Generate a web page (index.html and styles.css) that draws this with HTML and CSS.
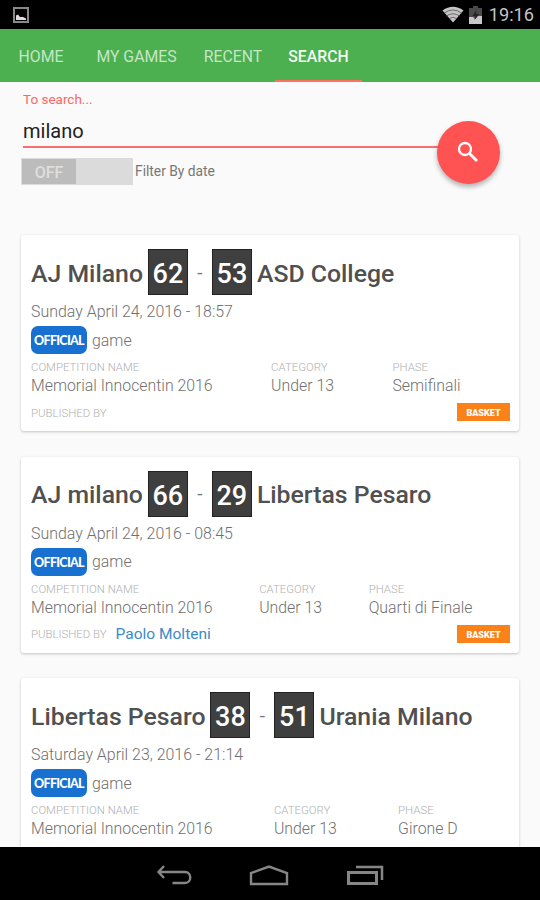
FILE: index.html
```html
<!DOCTYPE html>
<html lang="en">

<head>
    <meta charset="UTF-8" />
    <meta name="viewport" content="width=device-width, initial-scale=1.0" />
    <title>Search games</title>
    <link rel="stylesheet" href="styles.css">
</head>

<body>
    <div class="screen">
        <!-- Status bar -->
        <div class="status-bar">
            <svg class="icon-picture" width="16" height="16" viewBox="0 0 16 16">
                <path d="M1 1h14v14H1z" fill="none" stroke="#888" stroke-width="2" />
                <path d="M3 13V8.500l2-1 2 2.500h3l3 1.500V13z" fill="#ddd" />
            </svg>
            <div class="status-right">
                <svg width="22" height="17" viewBox="0 0 22 17">
                    <path d="M0.500 4.500Q11-3 21.500 4.500L11 16.500z" fill="#c4c4c4" />
                    <path d="M2 7.200Q11 0.800 20 7.200M4.500 10Q11 5.500 17.500 10M7 12.600Q11 10 15 12.600" fill="none" stroke="#555" stroke-width="0.800" />
                </svg>
                <svg width="13" height="18" viewBox="0 0 13 18">
                    <path d="M4 0h5v2h4v16H0V2h4z" fill="#4a4a4a" />
                    <path d="M0 11h4l2 2 3-3h4v8H0z" fill="#c8c8c8" />
                    <path d="M7.500 4L3.500 10h3l-1 4 4.500-6H7z" fill="#222" />
                </svg>
                <span class="clock">19:16</span>
            </div>
        </div>

        <!-- Tabs -->
        <nav class="tabs">
            <a class="tab tab-home">HOME</a>
            <a class="tab tab-games">MY GAMES</a>
            <a class="tab tab-recent">RECENT</a>
            <a class="tab tab-search active">SEARCH</a>
        </nav>

        <main class="content">
            <!-- Search form -->
            <div class="search-form">
                <div class="search-field">
                    <div class="search-label">To search...</div>
                    <div class="search-value">milano</div>
                </div>
                <div class="filter">
                    <div class="switch"><span class="switch-thumb">OFF</span></div>
                    <span class="filter-label">Filter By date</span>
                </div>
                <div class="fab">
                    <svg width="22" height="22" viewBox="0 0 22 22" fill="none" stroke="#fff">
                        <circle cx="8" cy="8" r="6" stroke-width="2.300" />
                        <path d="M12.500 12.500L20 20" stroke-width="2.800" />
                    </svg>
                </div>
            </div>

            <!-- Results -->
            <div class="card">
                <div class="teams">
                    <span class="team">AJ Milano</span>
                    <span class="score">62</span>
                    <span class="dash">-</span>
                    <span class="score">53</span>
                    <span class="team">ASD College</span>
                </div>
                <div class="date">Sunday April 24, 2016 - 18:57</div>
                <div class="type"><span class="official">OFFICIAL</span><span class="game">game</span></div>
                <div class="details">
                    <div class="detail"><div class="caption">COMPETITION NAME</div><div class="value">Memorial Innocentin 2016</div></div>
                    <div class="detail"><div class="caption">CATEGORY</div><div class="value">Under 13</div></div>
                    <div class="detail"><div class="caption">PHASE</div><div class="value">Semifinali</div></div>
                </div>
                <div class="card-footer">
                    <span class="caption">PUBLISHED BY</span>
                    <span class="sport">BASKET</span>
                </div>
            </div>

            <div class="card">
                <div class="teams">
                    <span class="team">AJ milano</span>
                    <span class="score">66</span>
                    <span class="dash">-</span>
                    <span class="score">29</span>
                    <span class="team">Libertas Pesaro</span>
                </div>
                <div class="date">Sunday April 24, 2016 - 08:45</div>
                <div class="type"><span class="official">OFFICIAL</span><span class="game">game</span></div>
                <div class="details">
                    <div class="detail"><div class="caption">COMPETITION NAME</div><div class="value">Memorial Innocentin 2016</div></div>
                    <div class="detail"><div class="caption">CATEGORY</div><div class="value">Under 13</div></div>
                    <div class="detail"><div class="caption">PHASE</div><div class="value">Quarti di Finale</div></div>
                </div>
                <div class="card-footer">
                    <span class="caption">PUBLISHED BY</span>
                    <span class="author">Paolo Molteni</span>
                    <span class="sport">BASKET</span>
                </div>
            </div>

            <div class="card">
                <div class="teams">
                    <span class="team">Libertas Pesaro</span>
                    <span class="score">38</span>
                    <span class="dash">-</span>
                    <span class="score">51</span>
                    <span class="team">Urania Milano</span>
                </div>
                <div class="date">Saturday April 23, 2016 - 21:14</div>
                <div class="type"><span class="official">OFFICIAL</span><span class="game">game</span></div>
                <div class="details">
                    <div class="detail"><div class="caption">COMPETITION NAME</div><div class="value">Memorial Innocentin 2016</div></div>
                    <div class="detail"><div class="caption">CATEGORY</div><div class="value">Under 13</div></div>
                    <div class="detail"><div class="caption">PHASE</div><div class="value">Girone D</div></div>
                </div>
            </div>
        </main>

        <!-- Navigation bar -->
        <div class="nav-bar">
            <svg width="36" height="22" viewBox="0 0 36 22" fill="none" stroke="#868686" stroke-width="2.400">
                <path d="M8 1L2.500 7L8 13M2.500 7H29c7 0 7 11 0 11H16.500" />
            </svg>
            <svg width="40" height="22" viewBox="0 0 40 22" fill="none" stroke="#868686" stroke-width="2.400">
                <path d="M2 19V8L20 1.500l18 6.500v11z" />
            </svg>
            <svg width="38" height="22" viewBox="0 0 38 22" fill="none" stroke="#868686">
                <path d="M2.500 7.500h28v11h-28z" stroke-width="3" />
                <path d="M10 2h26v13" stroke-width="2.500" />
            </svg>
        </div>
    </div>
</body>

</html>
```

FILE: styles.css
```css
body {
    margin: 0;
    font-family: Roboto, "Liberation Sans", sans-serif;
    background-color: #fafafa;
}

.screen {
    display: flex;
    flex-direction: column;
    width: 540px;
    height: 900px;
    overflow: hidden;
}

/* Status bar */
.status-bar {
    display: flex;
    justify-content: space-between;
    align-items: center;
    flex: none;
    height: 29px;
    box-sizing: border-box;
    padding: 0 6px 0 13px;
    background-color: #000;
}

.icon-picture {
    margin-top: 1px;
}

.status-right {
    display: flex;
    align-items: center;
    gap: 5px;
    height: 27px;
}

.clock {
    margin-left: 2px;
    font-size: 18.2px;
    line-height: 28px;
    color: #c4c4c4;
}

/* Tabs */
.tabs {
    display: flex;
    flex: none;
    height: 53px;
    background-color: #4caf50;
}

.tab {
    box-sizing: border-box;
    text-align: center;
    font-size: 15.8px;
    line-height: 55px;
    color: #c5e6c6;
}

.tab-home {
    width: 82px;
}

.tab-games {
    width: 109px;
}

.tab-recent {
    width: 84px;
}

.tab-search {
    width: 87px;
}

.tab.active {
    border-bottom: 2px solid #ff7060;
    font-weight: 500;
    color: #f0faf0;
}

.content {
    flex: 1;
    min-height: 0;
    overflow: hidden;
    padding: 0 21px;
}

/* Search form */
.search-form {
    position: relative;
    height: 153px;
    box-sizing: border-box;
    padding-top: 9px;
}

.search-field {
    width: 420px;
    height: 57px;
    box-sizing: border-box;
    margin-left: 2px;
    border-bottom: 2px solid #f96f6f;
}

.search-label {
    font-size: 13.5px;
    line-height: 17px;
    color: #ff6666;
}

.search-value {
    margin-top: 11px;
    font-size: 20px;
    line-height: 24px;
    color: #222;
}

.filter {
    display: flex;
    align-items: center;
    margin-top: 10px;
}

.switch {
    width: 112px;
    height: 27px;
    box-sizing: border-box;
    padding: 1px;
    background-color: #dbdbdb;
}

.switch-thumb {
    display: block;
    width: 54px;
    height: 25px;
    background-color: #bcbcbc;
    font-size: 16px;
    font-weight: 500;
    line-height: 27px;
    text-align: center;
    color: #dedede;
}

.filter-label {
    margin: -2px 0 0 2px;
    font-size: 13.8px;
    color: #777;
}

/* Floating search button */
.fab {
    position: absolute;
    left: 416px;
    top: 39px;
    display: flex;
    align-items: center;
    justify-content: center;
    width: 63px;
    height: 63px;
    padding: 0 2px 1px 0;
    box-sizing: border-box;
    border-radius: 50%;
    background-color: #ff5252;
    box-shadow: 0 3px 5px rgba(0, 0, 0, 0.3);
}

/* Result cards */
.card {
    height: 196px;
    box-sizing: border-box;
    margin-bottom: 25.7px;
    padding: 14px 10px 0;
    border-radius: 3px;
    background-color: #fff;
    box-shadow: 0 1px 3px rgba(0, 0, 0, 0.22);
}

.teams {
    display: flex;
    align-items: center;
    gap: 5px;
    height: 46px;
    white-space: nowrap;
}

.team {
    padding-top: 3px;
    font-size: 24.8px;
    font-weight: 500;
    line-height: 46px;
    color: #505050;
}

.score {
    width: 40px;
    height: 46px;
    box-sizing: border-box;
    border: 1px solid #222;
    background-color: #3f3f3f;
    font-size: 27px;
    font-weight: 500;
    line-height: 48px;
    text-align: center;
    color: #fff;
}

.dash {
    width: 14px;
    font-size: 19px;
    text-align: center;
    color: #777;
}

.date {
    margin-top: 7px;
    font-size: 15.95px;
    font-weight: 300;
    line-height: 20px;
    color: #707070;
}

.type {
    display: flex;
    align-items: center;
    margin-top: 4px;
    height: 28px;
}

.official {
    width: 56px;
    height: 28px;
    border-radius: 7px;
    background-color: #1870d0;
    font-family: Lato, sans-serif;
    font-size: 12.5px;
    font-weight: 900;
    letter-spacing: -0.7px;
    line-height: 29px;
    text-align: center;
    color: #fff;
}

.game {
    margin-left: 5px;
    font-size: 15.9px;
    font-weight: 300;
    color: #707070;
}

.details {
    display: flex;
    margin: 6px -10px 0 0;
}

.detail {
    flex: 1 0 auto;
}

.caption {
    font-size: 11.4px;
    font-weight: 300;
    line-height: 15px;
    color: #b0b0b0;
}

.value {
    margin-top: 1px;
    font-size: 15.85px;
    font-weight: 300;
    line-height: 20px;
    color: #707070;
}

.card-footer {
    display: flex;
    align-items: center;
    height: 20px;
    margin-top: 7px;
}

.author {
    margin: -2px 0 0 9px;
    font-size: 15.5px;
    color: #3d8ac8;
}

.sport {
    width: 53px;
    height: 18px;
    margin: -2px -1px 0 auto;
    background-color: #fa8219;
    font-size: 9px;
    font-weight: 900;
    line-height: 20px;
    text-align: center;
    color: #fff;
}

/* Navigation bar */
.nav-bar {
    display: flex;
    align-items: center;
    justify-content: center;
    flex: none;
    gap: 57px;
    height: 53px;
    padding-top: 4px;
    box-sizing: border-box;
    background-color: #000;
}
```
